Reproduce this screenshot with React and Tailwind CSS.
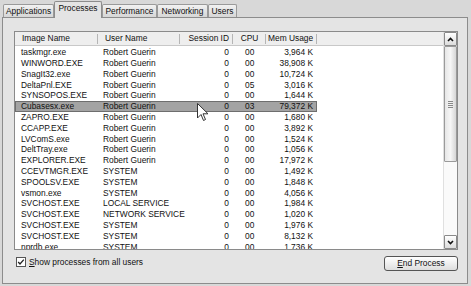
import React from "react";

const rows = [
  ["taskmgr.exe", "Robert Guerin", "0", "00", "3,964 K"],
  ["WINWORD.EXE", "Robert Guerin", "0", "00", "38,908 K"],
  ["SnagIt32.exe", "Robert Guerin", "0", "00", "10,724 K"],
  ["DeltaPnl.EXE", "Robert Guerin", "0", "05", "3,016 K"],
  ["SYNSOPOS.EXE", "Robert Guerin", "0", "00", "1,644 K"],
  ["Cubasesx.exe", "Robert Guerin", "0", "03", "79,372 K"],
  ["ZAPRO.EXE", "Robert Guerin", "0", "00", "1,680 K"],
  ["CCAPP.EXE", "Robert Guerin", "0", "00", "3,892 K"],
  ["LVComS.exe", "Robert Guerin", "0", "00", "1,524 K"],
  ["DeltTray.exe", "Robert Guerin", "0", "00", "1,056 K"],
  ["EXPLORER.EXE", "Robert Guerin", "0", "00", "17,972 K"],
  ["CCEVTMGR.EXE", "SYSTEM", "0", "00", "1,492 K"],
  ["SPOOLSV.EXE", "SYSTEM", "0", "00", "1,848 K"],
  ["vsmon.exe", "SYSTEM", "0", "00", "4,056 K"],
  ["SVCHOST.EXE", "LOCAL SERVICE", "0", "00", "1,984 K"],
  ["SVCHOST.EXE", "NETWORK SERVICE", "0", "00", "1,020 K"],
  ["SVCHOST.EXE", "SYSTEM", "0", "00", "1,976 K"],
  ["SVCHOST.EXE", "SYSTEM", "0", "00", "8,132 K"],
  ["nprdb.exe", "SYSTEM", "0", "00", "1,736 K"],
];

function Tab({ label, selected }) {
  if (selected) {
    return (
      <div className="relative z-10 -mb-px h-[17px] w-[48px] border border-b-0 border-[#8c8c8c] bg-[#e4e4e4] flex items-start justify-center pt-[2px] rounded-t-[2px]">
        {label}
      </div>
    );
  }
  return (
    <div className="h-[13px] border border-b-0 border-[#9a9a9a] bg-gradient-to-b from-[#f2f2f2] to-[#d6d6d6] flex items-center justify-center rounded-t-[2px] px-[4px]">
      {label}
    </div>
  );
}

function Sep() {
  return <div className="absolute right-0 top-[2px] h-[10px] w-px bg-[#b5b5b5]" />;
}

export default function App() {
  return (
    <div
      className="relative w-[471px] h-[286px] bg-[#d8d8d8] text-[8.4px] text-[#111] overflow-hidden leading-none whitespace-nowrap"
      style={{ fontFamily: '"Liberation Sans", Arial, sans-serif' }}
    >
      {/* Tabs */}
      <div className="flex items-end h-[17px] pl-[3px]">
        <div className="w-[51px]"><Tab label="Applications" /></div>
        <Tab label="Processes" selected />
        <div className="w-[55px]"><Tab label="Performance" /></div>
        <div className="w-[51px]"><Tab label="Networking" /></div>
        <div className="w-[29px]"><Tab label="Users" /></div>
      </div>

      {/* Panel */}
      <div className="ml-[2px] w-[466px] h-[267px] border border-[#8c8c8c] bg-[#e4e4e4] pt-[13px] pl-[11px]">
        {/* List box */}
        <div className="w-[444px] h-[219px] border border-[#8a8a8a] bg-white flex overflow-hidden">
          <div className="flex-1 flex flex-col overflow-hidden">
            {/* Header */}
            <div className="h-[14px] flex bg-[#eeeeee] border-b border-[#c8c8c8] items-center shrink-0">
              <div className="relative w-[83px] h-full flex items-center pl-[7px]">Image Name<Sep /></div>
              <div className="relative w-[82px] h-full flex items-center pl-[7px]">User Name<Sep /></div>
              <div className="relative w-[53px] h-full flex items-center justify-end pr-[4px]">Session ID<Sep /></div>
              <div className="relative w-[33px] h-full flex items-center justify-center">CPU<Sep /></div>
              <div className="relative w-[51px] h-full flex items-center pl-[2px]">Mem Usage<Sep /></div>
            </div>
            {/* Rows */}
            <div className="flex flex-col pt-px">
              {rows.map((r, i) => {
                const sel = i === 5;
                return (
                  <div
                    key={i}
                    className={
                      "h-[10.8px] flex items-center shrink-0 w-[302px] " +
                      (sel ? "bg-[#a3a3a3] outline outline-1 outline-[#6e6e6e] -outline-offset-1" : "")
                    }
                  >
                    <div className="w-[83px] pl-[6px]">{r[0]}</div>
                    <div className="w-[82px] pl-[5px]">{r[1]}</div>
                    <div className="w-[53px] text-right pr-[4px]">{r[2]}</div>
                    <div className="w-[33px] pl-[12px]">{r[3]}</div>
                    <div className="w-[51px] text-right pr-[4px]">{r[4]}</div>
                  </div>
                );
              })}
            </div>
          </div>
          {/* Scrollbar */}
          <div className="w-[14px] h-full flex flex-col bg-[#f4f4f4] border-l border-[#e0e0e0]">
            <div className="h-[14px] border border-[#8a8a8a] bg-gradient-to-b from-white to-[#dcdcdc] flex items-center justify-center rounded-[1px]">
              <svg width="7" height="5" viewBox="0 0 7 5"><path d="M1 4 L3.5 1.5 L6 4" fill="none" stroke="#111" strokeWidth="1.6" /></svg>
            </div>
            <div className="h-[116px] border border-[#9a9a9a] bg-gradient-to-r from-[#e6e6e6] via-[#f6f6f6] to-[#d6d6d6] flex items-center justify-center rounded-[1px]">
              <div className="flex flex-col gap-px">
                <div className="w-[5px] h-px bg-[#888]" />
                <div className="w-[5px] h-px bg-[#888]" />
                <div className="w-[5px] h-px bg-[#888]" />
                <div className="w-[5px] h-px bg-[#888]" />
              </div>
            </div>
            <div className="flex-1 bg-[#fafafa]" />
            <div className="h-[14px] border border-[#8a8a8a] bg-gradient-to-b from-white to-[#dcdcdc] flex items-center justify-center rounded-[1px]">
              <svg width="7" height="5" viewBox="0 0 7 5"><path d="M1 1 L3.5 3.5 L6 1" fill="none" stroke="#111" strokeWidth="1.6" /></svg>
            </div>
          </div>
        </div>

        {/* Bottom row */}
        <div className="flex items-start justify-between w-[444px] mt-[6px]">
          <div className="flex items-center gap-[3px] pt-[1px] pl-[2px]">
            <div className="w-[10px] h-[10px] border border-[#555] bg-white flex items-center justify-center">
              <svg width="8" height="8" viewBox="0 0 8 8"><path d="M1.2 4 L3 6 L6.8 1.6" fill="none" stroke="#222" strokeWidth="1.3" /></svg>
            </div>
            <span><span className="underline">S</span>how processes from all users</span>
          </div>
          <div className="w-[74px] h-[15px] border border-[#555] rounded-[3px] bg-gradient-to-b from-white to-[#dedede] flex items-center justify-center">
            <span><span className="underline">E</span>nd Process</span>
          </div>
        </div>
      </div>

      {/* Mouse cursor */}
      <svg className="absolute left-[197px] top-[103px]" width="12" height="19" viewBox="0 0 12 19">
        <path d="M0.5 0.5 L0.5 15 L4 11.5 L6.5 17.5 L8.5 16.5 L6 10.8 L11 10.8 Z" fill="white" stroke="#333" strokeWidth="1" strokeLinejoin="round" />
      </svg>
    </div>
  );
}
